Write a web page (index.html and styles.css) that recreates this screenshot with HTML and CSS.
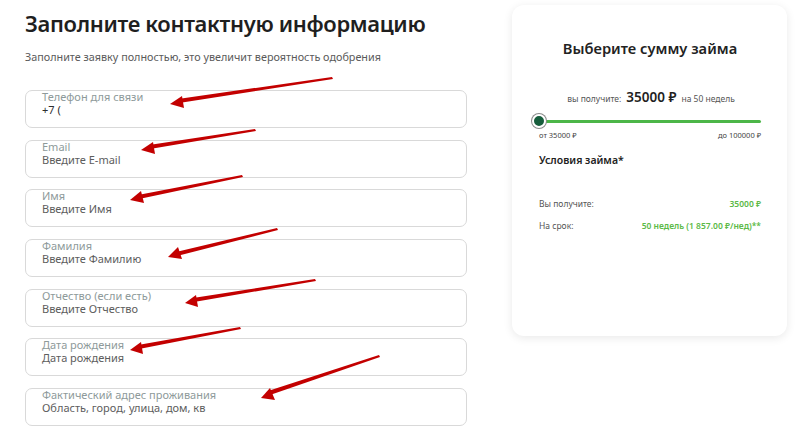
FILE: index.html
```html
<!DOCTYPE html>
<html lang="ru">
<head>
<meta charset="utf-8">
<link rel="stylesheet" href="styles.css">
</head>
<body>
<div class="page">
  <section class="form-col">
    <h1 class="title">Заполните контактную информацию</h1>
    <p class="subtitle">Заполните заявку полностью, это увеличит вероятность одобрения</p>
    <div class="fields">
      <div class="field"><span class="label">Телефон для связи</span><span class="value filled">+7 (</span></div>
      <div class="field"><span class="label">Email</span><span class="value">Введите E-mail</span></div>
      <div class="field"><span class="label">Имя</span><span class="value">Введите Имя</span></div>
      <div class="field"><span class="label">Фамилия</span><span class="value">Введите Фамилию</span></div>
      <div class="field"><span class="label">Отчество (если есть)</span><span class="value">Введите Отчество</span></div>
      <div class="field"><span class="label">Дата рождения</span><span class="value">Дата рождения</span></div>
      <div class="field"><span class="label">Фактический адрес проживания</span><span class="value">Область, город, улица, дом, кв</span></div>
    </div>
  </section>
  <aside class="card">
    <h2 class="card-title">Выберите сумму займа</h2>
    <div class="amount-row">
      <span class="muted">вы получите:</span>
      <span class="amount">35000 ₽</span>
      <span class="muted">на 50 недель</span>
    </div>
    <div class="slider">
      <div class="track"></div>
      <div class="knob"></div>
    </div>
    <div class="range">
      <span>от 35000 ₽</span>
      <span>до 100000 ₽</span>
    </div>
    <h3 class="cond-title">Условия займа*</h3>
    <div class="cond-row"><span>Вы получите:</span><span class="green">35000 ₽</span></div>
    <div class="cond-row"><span>На срок:</span><span class="green">50 недель (1 857.00 ₽/нед)**</span></div>
  </aside>
</div>
<svg class="arrows" width="800" height="446" viewBox="0 0 800 446">
  <g fill="#c30000">
    <polygon points="332,77 333,79 179,103 178,99"/>
    <polygon points="170,104 182,96 184,108"/>
    <polygon points="255,129 256,131 150,149 149,145"/>
    <polygon points="141,150 153,142 155,154"/>
    <polygon points="242,175 243,177 139,199 138,195"/>
    <polygon points="130,200 141,191 144,203"/>
    <polygon points="277,228 278,230 177,256 176,252"/>
    <polygon points="168,257 178,247 182,259"/>
    <polygon points="315,279 316,281 194,302 193,298"/>
    <polygon points="185,303 196,295 198,307"/>
    <polygon points="240,327 241,329 139,349 138,345"/>
    <polygon points="130,350 141,342 143,354"/>
    <polygon points="379,355 380,357 270,395 268,391"/>
    <polygon points="261,398 270,388 275,400"/>
  </g>
</svg>
</body>
</html>
```
FILE: styles.css
```css
* { box-sizing: border-box; }
html, body { margin: 0; padding: 0; background: #ffffff; }
body {
  width: 800px;
  height: 446px;
  overflow: hidden;
  position: relative;
  font-family: "Noto Sans", "Open Sans", "DejaVu Sans", sans-serif;
  color: #222;
}
.page {
  display: flex;
  align-items: flex-start;
  padding-left: 25px;
}
.form-col {
  width: 442px;
  display: flex;
  flex-direction: column;
}
.title {
  margin: 8px 0 0;
  font-size: 22px;
  line-height: 30px;
  font-weight: 600;
  color: #1f1f1f;
  letter-spacing: -0.35px;
  white-space: nowrap;
}
.subtitle {
  margin: 11px 0 0;
  font-size: 10.8px;
  line-height: 16px;
  color: #5a5a5a;
  white-space: nowrap;
}
.fields {
  margin-top: 25px;
  display: flex;
  flex-direction: column;
  gap: 11.7px;
}
.field {
  height: 38px;
  border: 1px solid #d9d9d9;
  border-radius: 7px;
  padding: 0 0 0 16px;
  display: flex;
  flex-direction: column;
}
.label {
  font-size: 11px;
  line-height: 12px;
  color: #8e9a9a;
}
.value {
  margin-top: 1px;
  font-size: 11px;
  line-height: 12px;
  color: #5d5d5d;
}
.value.filled { color: #2e2e2e; }

.card {
  margin: 5px 0 0 45px;
  width: 275px;
  height: 331px;
  border-radius: 12px;
  background: #fff;
  box-shadow: 0 2px 10px rgba(0,0,0,0.09);
  padding: 0 26px 0 27px;
  display: flex;
  flex-direction: column;
}
.card-title {
  margin: 33px 0 0;
  text-align: center;
  font-size: 14.7px;
  line-height: 20px;
  font-weight: 600;
  color: #222;
}
.amount-row {
  margin-top: 30px;
  display: flex;
  justify-content: center;
  align-items: baseline;
  gap: 5px;
  padding-left: 2px;
}
.muted { font-size: 8.5px; color: #555; }
.amount { font-size: 13.5px; font-weight: 600; color: #1f1f1f; }
.slider {
  position: relative;
  margin-top: 8px;
  height: 14px;
  display: flex;
  align-items: center;
}
.track {
  flex: 1;
  height: 3px;
  background: #4cb648;
  border-radius: 2px;
}
.knob {
  position: absolute;
  left: -7px;
  top: 0;
  width: 14px;
  height: 14px;
  border-radius: 50%;
  background: #165d3c;
  border: 2px solid #fff;
  box-shadow: 0 0 0 1px #8a8a8a;
}
.range {
  margin-top: 2px;
  display: flex;
  justify-content: space-between;
  font-size: 7.5px;
  color: #444;
}
.cond-title {
  margin: 12px 0 0;
  font-size: 10.5px;
  line-height: 16px;
  font-weight: 600;
  color: #222;
}
.cond-row {
  display: flex;
  justify-content: space-between;
  font-size: 8.5px;
  color: #555;
  line-height: 12px;
}
.cond-title + .cond-row { margin-top: 30px; }
.cond-row + .cond-row { margin-top: 10px; }
.green { color: #5cba47; font-weight: 600; }

.arrows {
  position: absolute;
  left: 0;
  top: 0;
  pointer-events: none;
}
```
